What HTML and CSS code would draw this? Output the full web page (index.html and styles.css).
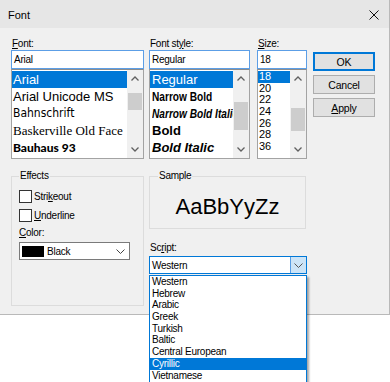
FILE: index.html
```html
<!DOCTYPE html>
<html lang="en">
<head>
  <meta charset="UTF-8">
  <title>Font</title>
  <link rel="stylesheet" href="styles.css">
</head>
<body>
  <div class="dialog">
    <div class="titlebar">
      <span class="title">Font</span>
      <svg class="close" width="10" height="10" viewBox="0 0 10 10"><path d="M0.5 0.5L9.5 9.5M9.5 0.5L0.5 9.5" stroke="#111" stroke-width="1"/></svg>
    </div>

    <div class="content">
      <div class="top">
        <div class="col col-font">
          <div class="label"><u>F</u>ont:</div>
          <div class="edit">Arial</div>
          <div class="list">
            <div class="items">
              <div class="item sel">Arial</div>
              <div class="item">Arial Unicode MS</div>
              <div class="item f-bahn">Bahnschrift</div>
              <div class="item f-bask">Baskerville Old Face</div>
              <div class="item f-bauh">Bauhaus 93</div>
            </div>
            <div class="scroll">
              <div class="arrow"><svg width="8" height="5" viewBox="0 0 8 5"><path d="M0.5 4.5L4 1L7.5 4.5" fill="none" stroke="#606060" stroke-width="1.3"/></svg></div>
              <div class="track"><div class="thumb thumb-font"></div></div>
              <div class="arrow"><svg width="8" height="5" viewBox="0 0 8 5"><path d="M0.5 0.5L4 4L7.5 0.5" fill="none" stroke="#606060" stroke-width="1.3"/></svg></div>
            </div>
          </div>
        </div>

        <div class="col col-style">
          <div class="label">Font st<u>y</u>le:</div>
          <div class="edit">Regular</div>
          <div class="list">
            <div class="items">
              <div class="item sel">Regular</div>
              <div class="item"><span class="s-narrow">Narrow Bold</span></div>
              <div class="item"><span class="s-narrow s-italic">Narrow Bold Italic</span></div>
              <div class="item s-bold">Bold</div>
              <div class="item s-bold s-italic">Bold Italic</div>
            </div>
            <div class="scroll">
              <div class="arrow"><svg width="8" height="5" viewBox="0 0 8 5"><path d="M0.5 4.5L4 1L7.5 4.5" fill="none" stroke="#606060" stroke-width="1.3"/></svg></div>
              <div class="track"><div class="thumb thumb-style"></div></div>
              <div class="arrow"><svg width="8" height="5" viewBox="0 0 8 5"><path d="M0.5 0.5L4 4L7.5 0.5" fill="none" stroke="#606060" stroke-width="1.3"/></svg></div>
            </div>
          </div>
        </div>

        <div class="col col-size">
          <div class="label"><u>S</u>ize:</div>
          <div class="edit">18</div>
          <div class="list">
            <div class="items sizes">
              <div class="item sel">18</div>
              <div class="item">20</div>
              <div class="item">22</div>
              <div class="item">24</div>
              <div class="item">26</div>
              <div class="item">28</div>
              <div class="item">36</div>
            </div>
            <div class="scroll">
              <div class="arrow"><svg width="8" height="5" viewBox="0 0 8 5"><path d="M0.5 4.5L4 1L7.5 4.5" fill="none" stroke="#606060" stroke-width="1.3"/></svg></div>
              <div class="track"><div class="thumb thumb-size"></div></div>
              <div class="arrow"><svg width="8" height="5" viewBox="0 0 8 5"><path d="M0.5 0.5L4 4L7.5 0.5" fill="none" stroke="#606060" stroke-width="1.3"/></svg></div>
            </div>
          </div>
        </div>

        <div class="buttons">
          <button class="btn default">OK</button>
          <button class="btn">Cancel</button>
          <button class="btn"><u>A</u>pply</button>
        </div>
      </div>

      <div class="bottom">
        <fieldset class="group effects">
          <legend>Effects</legend>
          <div class="check"><span class="box"></span>Stri<u>k</u>eout</div>
          <div class="check"><span class="box"></span><u>U</u>nderline</div>
          <div class="label color-label"><u>C</u>olor:</div>
          <div class="combo color-combo">
            <span class="swatch"></span>
            <span class="combo-text">Black</span>
            <svg class="chev" width="9" height="5" viewBox="0 0 9 5"><path d="M0.5 0.5L4.5 4.5L8.5 0.5" fill="none" stroke="#444" stroke-width="1"/></svg>
          </div>
        </fieldset>

        <div class="right">
          <fieldset class="group sample">
            <legend>Sample</legend>
            <div class="sample-text">AaBbYyZz</div>
          </fieldset>
          <div class="label script-label">Sc<u>r</u>ipt:</div>
          <div class="combo script-combo">
            <span class="combo-text">Western</span>
            <span class="drop-btn"><svg width="9" height="5" viewBox="0 0 9 5"><path d="M0.5 0.5L4.5 4.5L8.5 0.5" fill="none" stroke="#555" stroke-width="1"/></svg></span>
          </div>
        </div>
      </div>
    </div>

    <div class="dropdown">
      <div class="opt">Western</div>
      <div class="opt">Hebrew</div>
      <div class="opt">Arabic</div>
      <div class="opt">Greek</div>
      <div class="opt">Turkish</div>
      <div class="opt">Baltic</div>
      <div class="opt">Central European</div>
      <div class="opt sel">Cyrillic</div>
      <div class="opt">Vietnamese</div>
    </div>
  </div>
</body>
</html>
```

FILE: styles.css
```css
* { box-sizing: border-box; margin: 0; padding: 0; }
html, body { background: #fff; }
body {
  font-family: 'Liberation Sans', Arial, sans-serif;
  font-size: 10px;
  letter-spacing: -0.25px;
  color: #000;
  width: 390px;
  height: 382px;
  overflow: hidden;
}
u { text-decoration: underline; text-underline-offset: 1px; }

.dialog {
  position: relative;
  width: 390px;
  height: 315px;
  background: #f0f0f0;
  border-right: 1px solid #b9b9b9;
  border-bottom: 1px solid #b9b9b9;
}

.titlebar {
  height: 28px;
  background: #e6e6e6;
  display: flex;
  align-items: center;
  justify-content: space-between;
  padding: 1px 10px 0 8px;
}
.title { font-size: 11px; letter-spacing: 0; }
.close { display: block; }

.content { padding: 10px 0 0 11px; }

.top { display: flex; align-items: flex-start; }
.col { display: flex; flex-direction: column; }
.col-font { width: 133px; margin-right: 5px; }
.col-style { width: 101px; margin-right: 7px; }
.col-size { width: 50px; margin-right: 6px; }

.label { height: 12px; line-height: 12px; padding-left: 1px; }

.edit {
  height: 19px;
  line-height: 17px;
  padding-left: 2px;
  background: #fff;
  border: 1px solid #5c9ee6;
}

.list {
  height: 90px;
  background: #fff;
  border: 1px solid #a3a3a3;
  border-top-color: #8c8c8c;
  display: flex;
}
.items { flex: 1; padding-top: 1px; overflow: hidden; }
.item {
  height: 17px;
  line-height: 17px;
  padding-left: 1px;
  font-size: 13px;
  letter-spacing: 0;
  white-space: nowrap;
  overflow: hidden;
}
.item.sel { background: #0078d7; color: #fff; }
.sizes .item { height: 11.67px; line-height: 11.67px; font-size: 11px; padding-left: 1px; }

.f-bahn { font-family: 'DejaVu Sans Condensed', 'DejaVu Sans', sans-serif; font-stretch: condensed; font-size: 12px; }
.f-bask { font-family: 'Liberation Serif', serif; font-size: 13px; }
.f-bauh { font-family: Lato, sans-serif; font-weight: 900; font-size: 12px; }
.col-style .item { padding-left: 2px; }
.s-narrow {
  display: inline-block;
  font-weight: bold;
  transform: scaleX(0.78);
  transform-origin: left center;
}
.s-bold { font-weight: bold; }
.s-italic { font-style: italic; }

.scroll {
  width: 16px;
  background: #f0f0f0;
  display: flex;
  flex-direction: column;
}
.arrow {
  height: 17px;
  display: flex;
  align-items: center;
  justify-content: center;
}
.arrow svg { display: block; }
.track { flex: 1; }
.thumb { background: #cdcdcd; margin: 0 1px; }
.thumb-font { margin-top: 6px; height: 17px; }
.thumb-style { margin-top: 15px; height: 28px; }
.thumb-size { margin-top: 21px; height: 23px; }

.buttons {
  width: 62px;
  margin-top: 14px;
  display: flex;
  flex-direction: column;
  gap: 4px;
}
.btn {
  height: 19px;
  font-family: inherit;
  font-size: 10.5px;
  letter-spacing: -0.2px;
  color: #000;
  background: #e1e1e1;
  border: 1px solid #adadad;
}
.btn.default { border: 1px solid #0078d7; box-shadow: inset 0 0 0 1px #0078d7; }

.bottom { display: flex; margin-top: 11px; align-items: flex-start; }

.group {
  border: 1px solid #dcdcdc;
  padding: 0 7px;
}
.group legend { padding: 0 1px; height: 12px; line-height: 12px; }

.effects { width: 133px; height: 136px; margin-right: 5px; }
.check {
  display: flex;
  align-items: center;
  height: 13px;
  margin-top: 8px;
}
.check + .check { margin-top: 6px; }
.box {
  width: 13px;
  height: 13px;
  background: #fff;
  border: 1px solid #333;
  margin-right: 2px;
}
.color-label { margin-top: 5px; padding-left: 0; }
.combo {
  position: relative;
  display: flex;
  align-items: center;
  background: #fff;
  border: 1px solid #7a7a7a;
}
.color-combo { width: 111px; height: 18px; margin-top: 3px; padding-left: 2px; }
.swatch { width: 22px; height: 11px; background: #000; margin-right: 3px; }
.combo-text { flex: 1; }
.chev { margin-right: 4px; }

.right { width: 158px; display: flex; flex-direction: column; }
.sample { width: 157px; height: 59px; padding: 0 8px; }
.sample-text {
  text-align: center;
  font-size: 22px;
  letter-spacing: 0;
  line-height: 30px;
  padding-top: 10px;
  color: #000;
}
.script-label { margin-top: 13px; }
.script-combo {
  height: 18px;
  margin-top: 2px;
  padding-left: 2px;
  border-color: #0078d7;
}
.drop-btn {
  width: 16px;
  height: 16px;
  background: #cce4f7;
  border-left: 1px solid #569de5;
  display: flex;
  align-items: center;
  justify-content: center;
}

.dropdown {
  position: absolute;
  left: 149px;
  top: 275px;
  width: 158px;
  height: 110px;
  background: #fff;
  border: 1px solid #0078d7;
  box-shadow: 2px 2px 2px rgba(0,0,0,0.35);
}
.opt {
  height: 11.7px;
  line-height: 11.7px;
  padding-left: 2px;
  white-space: nowrap;
}
.opt.sel { background: #0078d7; color: #fff; }
```
